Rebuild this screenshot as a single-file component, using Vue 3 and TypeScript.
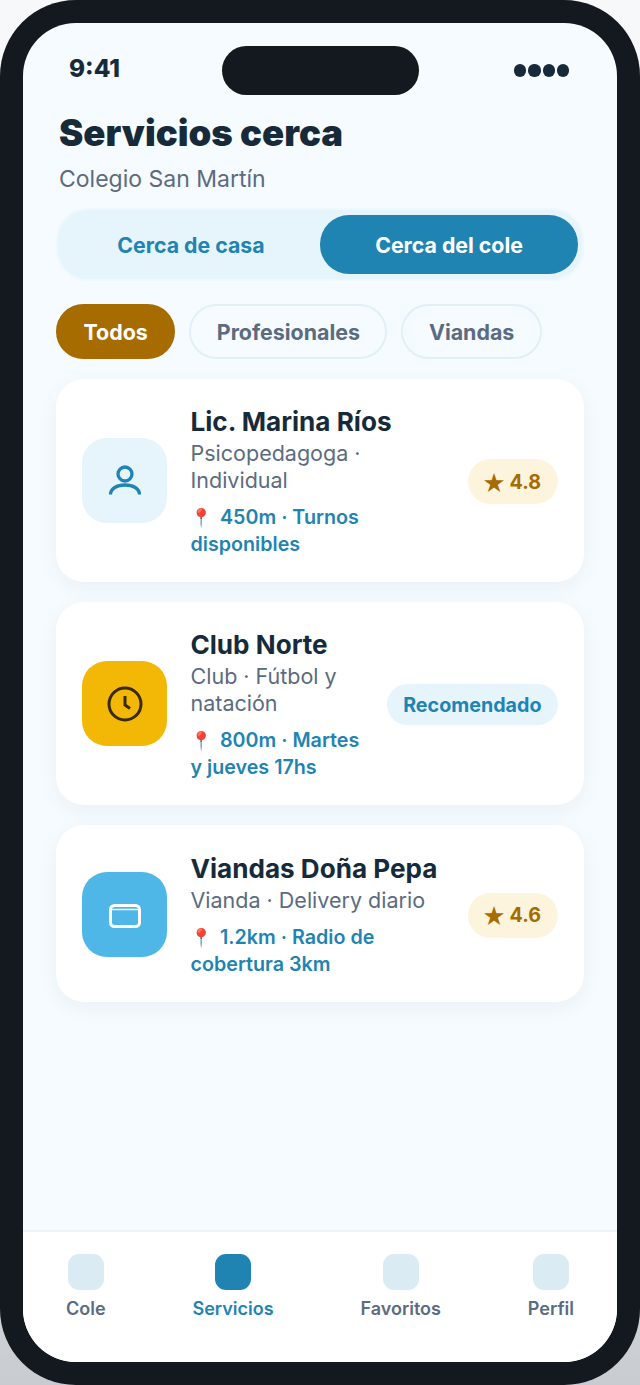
<template>
  <div class="phone">
    <div class="screen">
      <div class="status">
        <span class="time">9:41</span>
        <div class="island"></div>
        <div class="dots"><i v-for="d in 4" :key="d"></i></div>
      </div>

      <main class="content">
        <h1>Servicios cerca</h1>
        <p class="school">Colegio San Martín</p>

        <div class="segment">
          <div class="seg">Cerca de casa</div>
          <div class="seg active">Cerca del cole</div>
        </div>

        <div class="chips">
          <div v-for="c in chips" :key="c" class="chip" :class="{ on: c === 'Todos' }">{{ c }}</div>
        </div>

        <div class="cards">
          <article v-for="s in services" :key="s.name" class="card">
            <div class="thumb" :class="s.kind">
              <svg v-if="s.kind === 'person'" width="36" height="36" viewBox="0 0 36 36" fill="none" stroke="#1f84b2" stroke-width="3.300">
                <circle cx="18" cy="11" r="7" />
                <path d="M3.500 31.500c0-6 6.500-9.500 14.500-9.500s14.500 3.500 14.500 9.500" />
              </svg>
              <svg v-else-if="s.kind === 'clock'" width="36" height="36" viewBox="0 0 36 36" fill="none" stroke="#3a2a08" stroke-width="3">
                <circle cx="18" cy="18" r="16" />
                <path d="M18 10v9l5 3.500" />
              </svg>
              <svg v-else class="card-svg" width="32" height="24" viewBox="0 0 32 24" fill="none" stroke="#fff" stroke-width="3">
                <rect x="1.500" y="1.500" width="29" height="21" rx="4" />
                <path d="M1.500 5.500h29" stroke-width="1.500" />
              </svg>
            </div>
            <div class="info">
              <h2>{{ s.name }}</h2>
              <p class="desc">{{ s.desc }}</p>
              <p class="meta"><span class="pin">📍</span> {{ s.meta }}</p>
            </div>
            <div class="badge" :class="{ rec: !s.rating }">
              <template v-if="s.rating"><span class="star">★</span>{{ s.rating }}</template>
              <template v-else>Recomendado</template>
            </div>
          </article>
        </div>
      </main>

      <nav class="tabbar">
        <div v-for="t in tabs" :key="t" class="tab" :class="{ current: t === 'Servicios' }">
          <div class="tab-icon"></div>
          <span>{{ t }}</span>
        </div>
      </nav>
    </div>
  </div>
</template>

<script setup lang="ts">
interface Service {
  name: string;
  desc: string;
  meta: string;
  kind: string;
  rating?: string;
}

const chips: string[] = ["Todos", "Profesionales", "Viandas"];
const tabs: string[] = ["Cole", "Servicios", "Favoritos", "Perfil"];

const services: Service[] = [
  {
    name: "Lic. Marina Ríos",
    desc: "Psicopedagoga · Individual",
    meta: "450m · Turnos disponibles",
    kind: "person",
    rating: "4.8",
  },
  {
    name: "Club Norte",
    desc: "Club · Fútbol y natación",
    meta: "800m · Martes y jueves 17hs",
    kind: "clock",
  },
  {
    name: "Viandas Doña Pepa",
    desc: "Vianda · Delivery diario",
    meta: "1.2km · Radio de cobertura 3km",
    kind: "card-icon",
    rating: "4.6",
  },
];
</script>

<style>
html,
body {
  margin: 0;
  background: linear-gradient(#f7f8f9, #f0f2f4 70%, #c8ccd0);
}
</style>

<style scoped>
* {
  box-sizing: border-box;
}

.phone {
  width: 640px;
  height: 1385px;
  padding: 23px;
  background: #14191f;
  border-radius: 76px;
  font-family: Inter, "Noto Sans", sans-serif;
  color: #172a3a;
  overflow: hidden;
}

.screen {
  height: 1339px;
  border-radius: 53px;
  background: #f6fbff;
  overflow: hidden;
  display: flex;
  flex-direction: column;
}

.status {
  height: 72px;
  flex-shrink: 0;
  padding: 23px 48px 0 46px;
  display: flex;
  justify-content: space-between;
  align-items: center;
}

.time {
  font-size: 24.300px;
  font-weight: 800;
  width: 52px;
  margin-top: -6px;
}

.island {
  width: 197px;
  height: 49px;
  border-radius: 25px;
  background: #14191f;
  margin-left: 5px;
}

.dots {
  display: flex;
  gap: 2px;
}

.dots i {
  width: 12.250px;
  height: 12.250px;
  border-radius: 50%;
  background: #172a3a;
}

.content {
  flex: 1;
  padding: 15px 33px 0;
}

h1 {
  margin: 0 0 0 3px;
  font-size: 36.500px;
  line-height: 46px;
  font-weight: 900;
}

.school {
  margin: 9px 0 0 3px;
  font-size: 23px;
  line-height: 28px;
  color: #5b6b80;
}

.segment {
  margin-top: 15px;
  height: 73px;
  padding: 5px 4px;
  border: 2px solid #eef8fd;
  border-radius: 32px;
  background: #e6f4fc;
  display: flex;
}

.seg {
  flex: 1;
  border-radius: 29px;
  display: flex;
  align-items: center;
  justify-content: center;
  font-size: 21.300px;
  font-weight: 700;
  color: #1f84b2;
}

.seg.active {
  background: #1f84b2;
  color: #fff;
}

.chips {
  margin-top: 23px;
  display: flex;
  gap: 14px;
}

.chip {
  height: 55px;
  padding: 0 25.500px;
  border: 2px solid #e1eff7;
  border-radius: 28px;
  display: flex;
  align-items: center;
  font-size: 21.400px;
  font-weight: 700;
  color: #5b6b80;
}

.chip.on {
  background: #a66c00;
  border-color: #a66c00;
  color: #fff;
}

.cards {
  margin-top: 20px;
  display: flex;
  flex-direction: column;
  gap: 20px;
}

.card {
  padding: 26px;
  background: #fff;
  border-radius: 28px;
  box-shadow: 0 6px 20px rgba(23, 42, 58, 0.05);
  display: flex;
  align-items: center;
}

.card:last-child {
  padding-top: 27px;
}

.thumb {
  width: 85px;
  height: 85px;
  flex-shrink: 0;
  margin-right: 23.500px;
  border-radius: 25px;
  display: flex;
  align-items: center;
  justify-content: center;
}

.thumb.person {
  background: #e6f4fc;
}

.thumb.clock {
  background: #f3b705;
}

.thumb.card-icon {
  background: #4fb6e8;
}

.card-svg {
  margin-top: 3px;
}

.info {
  flex: 1;
  min-width: 0;
}

h2 {
  margin: 0;
  font-size: 26.100px;
  line-height: 33px;
  font-weight: 700;
}

.desc {
  margin: 1.500px 0 0;
  font-size: 21.500px;
  line-height: 27px;
  color: #5b6b80;
}

.meta {
  margin: 10px 0 -2.500px;
  font-size: 19.700px;
  line-height: 27.500px;
  font-weight: 600;
  color: #1f84b2;
}

.pin {
  display: inline-block;
  width: 24.500px;
  font-family: "Noto Color Emoji", Inter, sans-serif;
  font-size: 18px;
  line-height: 1;
  font-weight: 400;
}

.badge {
  flex-shrink: 0;
  margin: 2px 0 0 16px;
  height: 45px;
  padding: 0 17px 0 14px;
  border-radius: 23px;
  background: #fdf4de;
  color: #a66c00;
  display: flex;
  align-items: center;
  font-size: 19.700px;
  font-weight: 700;
  white-space: nowrap;
}

.star {
  font-size: 23px;
  line-height: 1;
  margin: 5px 3.500px 0 0;
}

.badge.rec {
  height: 41px;
  padding: 0 16.500px;
  background: #e6f4fc;
  color: #1f84b2;
}

.tabbar {
  height: 132px;
  flex-shrink: 0;
  padding: 22px 43px 0;
  background: #fff;
  border-top: 2px solid #edf3f7;
  display: flex;
  justify-content: space-between;
  align-items: flex-start;
}

.tab {
  display: flex;
  flex-direction: column;
  align-items: center;
  gap: 8px;
  font-size: 18px;
  line-height: 22px;
  font-weight: 600;
  color: #5b6b80;
}

.tab-icon {
  width: 36px;
  height: 36px;
  border-radius: 11px;
  background: #dbebf4;
}

.tab.current {
  color: #1f84b2;
}

.tab.current .tab-icon {
  background: #1f84b2;
}
</style>
